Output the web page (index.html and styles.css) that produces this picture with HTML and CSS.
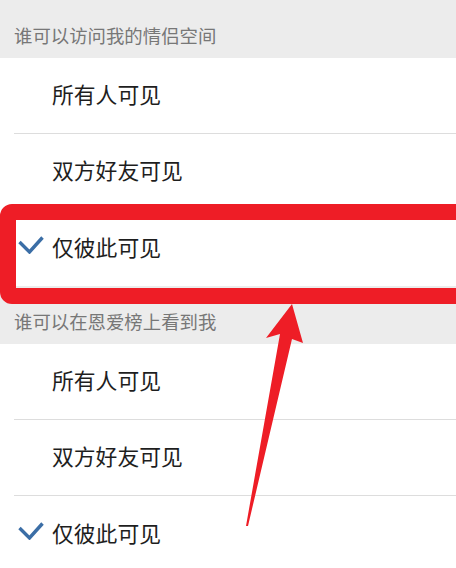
FILE: index.html
```html
<!DOCTYPE html>
<html lang="zh-CN">
<head>
  <meta charset="UTF-8">
  <title>隐私设置</title>
  <link rel="stylesheet" href="styles.css">
</head>
<body>
  <div class="screen">
    <section class="group">
      <div class="group-title">谁可以访问我的情侣空间</div>
      <ul class="options">
        <li class="option"><span class="mark"></span>所有人可见</li>
        <li class="option"><span class="mark"></span>双方好友可见</li>
        <li class="option selected">
          <span class="mark">
            <svg width="26" height="18" viewBox="0 0 26 18"><polyline points="1.5,6 11.5,16 24.5,1.5" fill="none" stroke="#3b6ea6" stroke-width="3.4"/></svg>
          </span>仅彼此可见
        </li>
      </ul>
    </section>

    <section class="group">
      <div class="group-title">谁可以在恩爱榜上看到我</div>
      <ul class="options">
        <li class="option"><span class="mark"></span>所有人可见</li>
        <li class="option"><span class="mark"></span>双方好友可见</li>
        <li class="option selected">
          <span class="mark">
            <svg width="26" height="18" viewBox="0 0 26 18"><polyline points="1.5,6 11.5,16 24.5,1.5" fill="none" stroke="#3b6ea6" stroke-width="3.4"/></svg>
          </span>仅彼此可见
        </li>
      </ul>
    </section>

    <!-- red markup drawn over the screenshot -->
    <svg class="annotation" width="456" height="568" viewBox="0 0 456 568">
      <rect x="8" y="212" width="480" height="84" rx="4" fill="none" stroke="#ee1d26" stroke-width="16"/>
      <polygon points="292,304 303,343 292,339 248,526 246,526 280,334 266,338" fill="#ee1d26"/>
    </svg>
  </div>
</body>
</html>
```

FILE: styles.css
```css
body {
  margin: 0;
  background: #ececec;
  font-family: "Noto Sans CJK SC", "Noto Sans", sans-serif;
}
.screen {
  position: relative;
  width: 456px;
  height: 568px;
  overflow: hidden;
}
.group-title {
  height: 58px;
  box-sizing: border-box;
  padding: 12px 0 0 14px;
  display: flex;
  align-items: center;
  font-size: 18.4px;
  color: #777;
}
.options {
  list-style: none;
  margin: 0;
  padding: 0;
  background: #fff;
}
.option {
  display: flex;
  align-items: center;
  height: 76px;
  box-sizing: border-box;
  padding-bottom: 4px;
  margin-left: 14px;
  border-bottom: 1px solid #dddddd;
  font-size: 21.8px;
  color: #1e1e1e;
}
.option:last-child {
  border-bottom: none;
}
.mark {
  width: 38px;
  flex-shrink: 0;
  display: flex;
  align-items: center;
  padding-left: 4px;
  box-sizing: border-box;
  margin-top: -3px;
}
.annotation {
  position: absolute;
  left: 0;
  top: 0;
  pointer-events: none;
}
```
